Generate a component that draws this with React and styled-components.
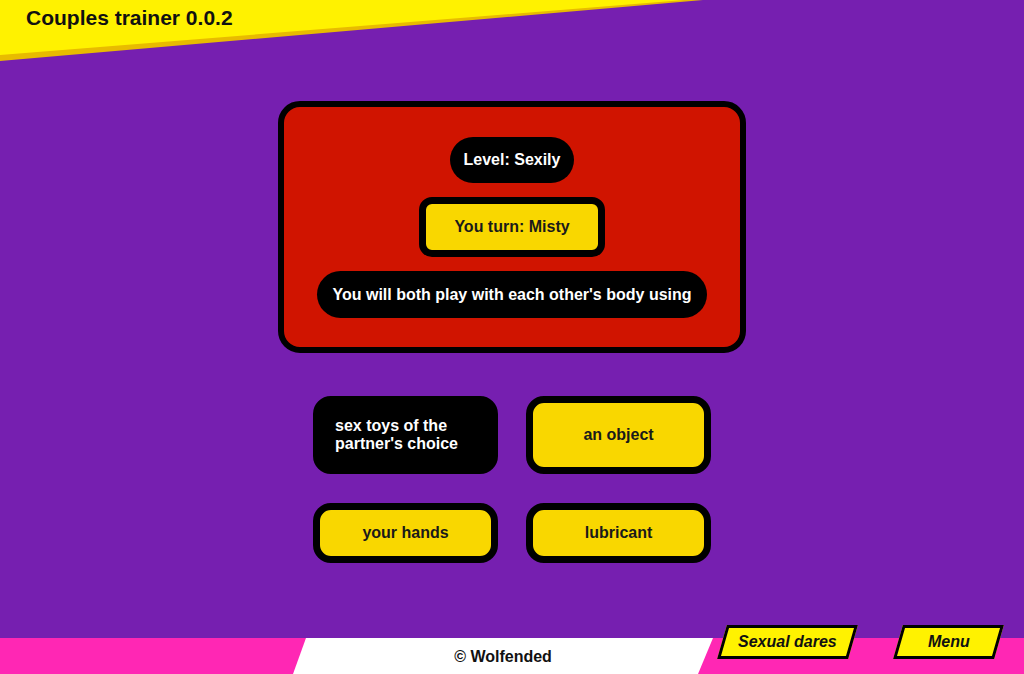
import React from "react";
import styled, { createGlobalStyle } from "styled-components";

const GlobalStyle = createGlobalStyle`
  html, body { margin: 0; padding: 0; }
  body {
    background: #761fb0;
    font-family: "Liberation Sans", Arial, sans-serif;
  }
  * { box-sizing: border-box; }
`;

const Page = styled.div`
  height: 100vh;
  display: flex;
  flex-direction: column;
  overflow: hidden;
  background: #761fb0;
`;

const Header = styled.header`
  position: relative;
  flex: none;
  height: 62px;
  padding: 6px 0 0 26px;
  background: #e8bb00;
  clip-path: polygon(0 0, 703px 0, 0 61px);
  &::before {
    content: "";
    position: absolute;
    inset: 0;
    background: #fff200;
    clip-path: polygon(0 0, 684px 0, 0 55px);
  }
`;

const Title = styled.h1`
  position: relative;
  margin: 0;
  font-size: 21px;
  line-height: 24px;
  font-weight: 700;
  color: #111;
`;

const Main = styled.main`
  flex: 1;
  display: flex;
  flex-direction: column;
  align-items: center;
  padding-top: 39px;
`;

const Card = styled.section`
  width: 468px;
  border: 6px solid #000;
  border-radius: 22px;
  background: #d01400;
  padding: 30px 0 29px;
  display: flex;
  flex-direction: column;
  align-items: center;
  gap: 14px;
`;

const Pill = styled.div`
  height: ${(p) => p.$h}px;
  padding: 0 ${(p) => p.$px}px;
  border-radius: 24px;
  background: #000;
  color: #fff;
  font-size: 16px;
  font-weight: 700;
  display: flex;
  align-items: center;
  white-space: nowrap;
`;

const Turn = styled.div`
  height: 60px;
  padding: 0 28px;
  border: 7px solid #000;
  border-radius: 13px;
  background: #f9d700;
  color: #1a1a1a;
  font-size: 16px;
  font-weight: 700;
  display: flex;
  align-items: center;
  white-space: nowrap;
`;

const Answers = styled.div`
  margin-top: 43px;
  display: grid;
  grid-template-columns: 185px 185px;
  column-gap: 28px;
  row-gap: 29px;
`;

const Answer = styled.button`
  font-family: inherit;
  border: 7px solid #000;
  border-radius: 18px;
  padding: 14px 15px;
  background: ${(p) => (p.$selected ? "#000" : "#f9d700")};
  color: ${(p) => (p.$selected ? "#fff" : "#1a1a1a")};
  font-size: 16px;
  line-height: 18px;
  font-weight: 700;
  display: flex;
  align-items: center;
  justify-content: ${(p) => (p.$selected ? "flex-start" : "center")};
  text-align: ${(p) => (p.$selected ? "left" : "center")};
  cursor: pointer;
`;

const Footer = styled.footer`
  flex: none;
  height: 49px;
  display: flex;
  align-items: flex-start;
  background: linear-gradient(to bottom, transparent 13px, #ff27b4 13px);
`;

const Credit = styled.div`
  margin-left: 293px;
  margin-top: 13px;
  width: 420px;
  height: 36px;
  padding-top: 1px;
  background: #fff;
  clip-path: polygon(13px 0, 100% 0, calc(100% - 15px) 100%, 0 100%);
  display: flex;
  align-items: center;
  justify-content: center;
  font-size: 16px;
  font-weight: 700;
  color: #111;
`;

const NavButton = styled.button`
  margin-left: ${(p) => p.$ml}px;
  width: ${(p) => p.$w}px;
  height: 34px;
  padding: 0;
  border: 3px solid #000;
  background: #fff200;
  transform: skewX(-16deg);
  display: flex;
  align-items: center;
  justify-content: center;
  font-family: inherit;
  cursor: pointer;
`;

const NavLabel = styled.span`
  display: block;
  transform: skewX(16deg);
  font-size: 16px;
  font-weight: 700;
  font-style: italic;
  color: #111;
  white-space: nowrap;
`;

export default function App() {
  return (
    <Page>
      <GlobalStyle />
      <Header>
        <Title>Couples trainer 0.0.2</Title>
      </Header>
      <Main>
        <Card>
          <Pill $h={46} $px={14}>Level: Sexily</Pill>
          <Turn>You turn: Misty</Turn>
          <Pill $h={47} $px={15}>You will both play with each other's body using</Pill>
        </Card>
        <Answers>
          <Answer $selected>sex toys of the partner's choice</Answer>
          <Answer>an object</Answer>
          <Answer>your hands</Answer>
          <Answer>lubricant</Answer>
        </Answers>
      </Main>
      <Footer>
        <Credit>© Wolfended</Credit>
        <NavButton $ml={9} $w={131}>
          <NavLabel>Sexual dares</NavLabel>
        </NavButton>
        <NavButton $ml={45} $w={101}>
          <NavLabel>Menu</NavLabel>
        </NavButton>
      </Footer>
    </Page>
  );
}
